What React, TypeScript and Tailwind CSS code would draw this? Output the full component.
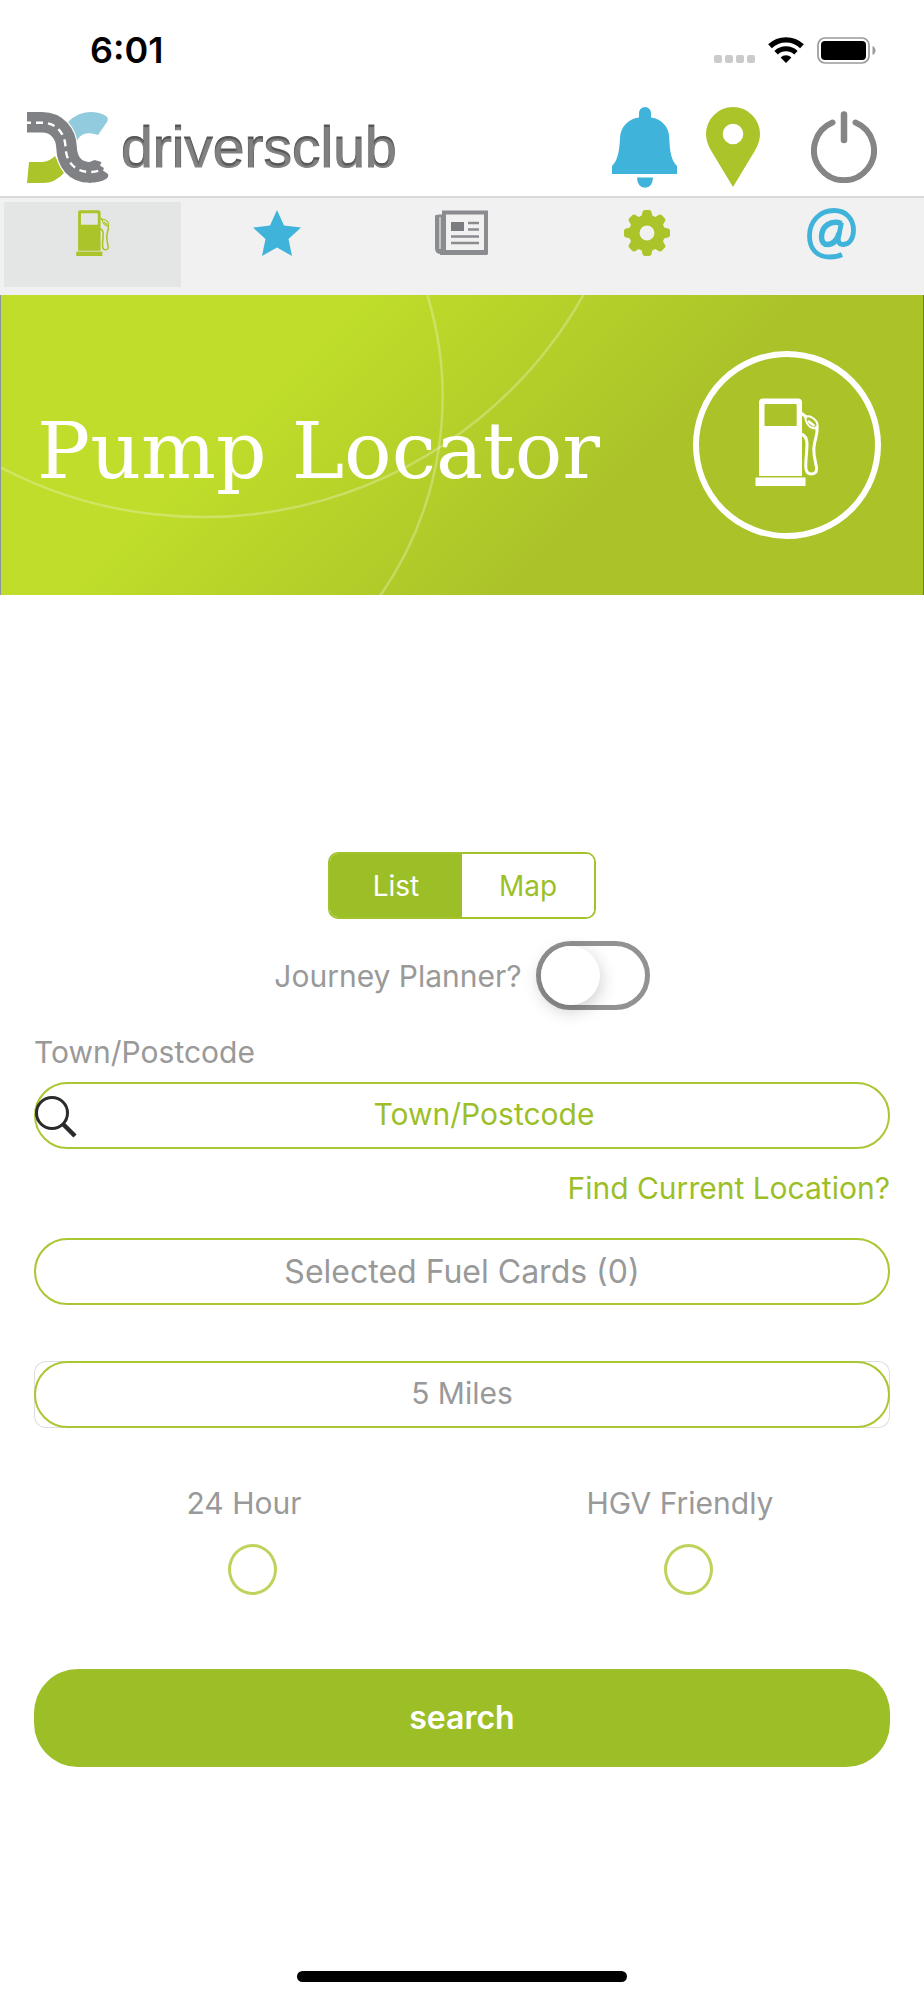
import { useState } from "react";

function WifiIcon() {
  return (
    <svg width="36" height="26" viewBox="0 0 36 26" fill="none" stroke="#000" aria-hidden="true">
      <path d="M2 9.2A23.3 23.3 0 0 1 34 9.2" strokeWidth="5.4" />
      <path d="M8.1 15.7A14.4 14.4 0 0 1 27.9 15.7" strokeWidth="5" />
      <path d="M18 26L12.6 20.4A8 8 0 0 1 23.4 20.4Z" fill="#000" stroke="none" />
    </svg>
  );
}

function BatteryIcon() {
  return (
    <svg width="59" height="27" viewBox="0 0 59 27" fill="none" aria-hidden="true">
      <rect x="1" y="1" width="51" height="25" rx="7" stroke="#9b9b9b" strokeWidth="1.7" />
      <rect x="4" y="4" width="45" height="19" rx="4" fill="#000" />
      <path d="M55.500 9Q58.500 10.500 58.500 13.500T55.500 18Z" fill="#9b9b9b" />
    </svg>
  );
}

function RoadLogo() {
  return (
    <svg width="82" height="71" viewBox="0 0 82 71" fill="none" aria-hidden="true">
      <path d="M41 10Q51 0 63 0Q73 0 79 4Q82 6 80 10L71 23Q63 20 57 22Q52 24 50 29Q47 17 41 10Z" fill="#93cbde" />
      <path d="M2 50H16Q23 49 28 44L37 61Q28 71 16 71H0Z" fill="#abc429" />
      <path d="M0 10.300H15C30 10.300 39 22 39.500 35C40 50 48 60.500 63 60.500H66" stroke="#fff" strokeWidth="23" />
      <path d="M0 10.300H15C30 10.300 39 22 39.500 35C40 50 48 60.500 63 60.500H64" stroke="#808184" strokeWidth="20.600" />
      <path d="M62 50.200L67.500 48L74.500 50L73 53.500L77 56L76 58.500L81 62Q82 65 79 67Q72 71 62 70.800Z" fill="#808184" />
      <path d="M-3 10.800H15C30 10.800 38 22 38.500 35C39 50 48 60 63 60Q70 60 75 57.500" stroke="#fff" strokeWidth="2.400" strokeDasharray="7 5" />
    </svg>
  );
}

function BellIcon() {
  return (
    <svg width="65" height="81" viewBox="0 0 65 81" fill="#3fb3d9" aria-hidden="true">
      <path d="M27 10.500V6A6 6 0 0 1 39 6V10.500C50 12 57 20 57.300 31C57.600 46 60 54 65 59V67H0V59C5 54 7.400 46 8 31C8.500 20 16 12 27 10.500Z" />
      <path d="M25 70.500H41Q40.500 80.700 33 80.700T25 70.500Z" />
    </svg>
  );
}

function PinIcon() {
  return (
    <svg width="54" height="80" viewBox="0 0 54 80" fill="#abc429" aria-hidden="true">
      <path
        fillRule="evenodd"
        d="M27 80L5 43.500Q0 35 0 27A27 27 0 0 1 54 27Q54 35 49 43.500ZM27 16.700A10.300 10.300 0 1 0 27 37.300A10.300 10.300 0 1 0 27 16.700Z"
      />
    </svg>
  );
}

function PowerIcon() {
  return (
    <svg width="66" height="72" viewBox="0 0 66 72" fill="none" stroke="#858585" strokeWidth="6" strokeLinecap="round" aria-hidden="true">
      <path d="M21.500 11.500A30 30 0 1 0 44.500 11.500" />
      <path d="M33 3.500V29" strokeWidth="6.500" />
    </svg>
  );
}

function PumpIcon({ className }: { className?: string }) {
  return (
    <svg viewBox="0 0 64 88" fill="none" className={className} aria-hidden="true">
      <path
        fill="currentColor"
        fillRule="evenodd"
        d="M8 .500H43Q47 .500 47 4.500V78H4V4.500Q4 .500 8 .500ZM10.500 6Q9.500 6 9.500 7V28H41.700V7Q41.700 6 40.700 6Z"
      />
      <path d="M.500 79.500H50.500V88H.500Z" fill="currentColor" />
      <path
        d="M46 15L52 19.500M46 36Q52 38 52 46C52 56 50 64 51 71Q52 76 56 76Q62 76 61.500 70C61 64 58 58 59 49C60 40 63 36 62 28"
        stroke="currentColor"
        strokeWidth="3"
      />
      <path d="M50.500 19Q54 17 58.500 20.500T62.500 28L60 30.500Q55 30 52.500 26T50.500 19Z" stroke="currentColor" strokeWidth="2" />
      <path d="M53 23L59.500 28" stroke="currentColor" strokeWidth="2.500" />
    </svg>
  );
}

function StarIcon() {
  return (
    <svg width="48" height="46" viewBox="0 0 48 46" fill="#3fb3d9" aria-hidden="true">
      <path d="M24 0L31 15.500L48 17.500L35.500 29L39 46L24 37.500L9 46L12.500 29L0 17.500L17 15.500Z" />
    </svg>
  );
}

function NewsIcon() {
  return (
    <svg width="54" height="46" viewBox="0 0 54 46" fill="none" aria-hidden="true">
      <path d="M0 6Q0 4.500 4 4.500H8V44H6Q0 44 0 38Z" fill="#8b8c90" />
      <path d="M5 7V39" stroke="#c4c5c7" strokeWidth="2" />
      <rect x="9" y="2.500" width="42" height="40" fill="#f1f1f1" stroke="#8b8c90" strokeWidth="4" />
      <path d="M5 42.500H52" stroke="#8b8c90" strokeWidth="5" />
      <path d="M16 12H29V21H16Z" fill="#7b7c80" />
      <path d="M33 13H44M33 19.500H44M16 26.500H44M16 33H44" stroke="#8b8c90" strokeWidth="2.600" />
    </svg>
  );
}

function GearIcon() {
  return (
    <svg width="48" height="46" viewBox="-24 -23 48 46" fill="#abc429" aria-hidden="true">
      <circle r="12.700" fill="none" stroke="#abc429" strokeWidth="10.500" />
      {[0, 45, 90, 135, 180, 225, 270, 315].map((angle) => (
        <path key={angle} d="M-6.500 -14L-4.800 -19.500Q-4.500 -23 -2 -23H2Q4.500 -23 4.800 -19.500L6.500 -14Z" transform={`rotate(${angle})`} />
      ))}
    </svg>
  );
}

function AtIcon() {
  return (
    <svg width="49" height="52" viewBox="0 0 49 52" fill="none" stroke="#3fb3d9" className="-mt-0.5" aria-hidden="true">
      <path d="M35 46.500Q30 49 23 49C9 49 2.500 40 2.500 28C2.500 13 13 2.500 27 2.500C39 2.500 46.500 11 46.500 22C46.500 31 42 36.500 36.500 36.500C32 36.500 30.700 33.500 31.500 29L34.500 14.500" strokeWidth="4.800" />
      <path d="M34.500 15.500C24 11.500 14.500 18 14.500 29C14.500 34 17 36.500 20.500 36.500C26.500 36.500 31 31 32 25" strokeWidth="5.500" />
    </svg>
  );
}

function SearchIcon() {
  return (
    <svg width="44" height="44" viewBox="0 0 44 44" fill="none" stroke="#2b2b2b" className="pointer-events-none absolute left-0 top-[13px]" aria-hidden="true">
      <circle cx="18" cy="18" r="15.500" strokeWidth="3" />
      <path d="M29 29L41 41" strokeWidth="4.500" />
    </svg>
  );
}

const tabs = [
  { name: "Pump locator", icon: <PumpIcon className="h-[46px] text-[#abc429]" /> },
  { name: "Favourites", icon: <StarIcon /> },
  { name: "News", icon: <NewsIcon /> },
  { name: "Settings", icon: <GearIcon /> },
  { name: "Contact", icon: <AtIcon /> },
];

export default function App() {
  const [view, setView] = useState("List");
  const [tab, setTab] = useState("Pump locator");

  return (
    <div className="flex min-h-screen flex-col bg-white font-['Inter',sans-serif] text-[30px] leading-10 text-[#999]">
      <div className="flex h-[100px] items-center justify-between pl-[90px] pr-12 text-black">
        <span className="text-[36px] font-semibold">6:01</span>
        <div className="flex items-center gap-[13px]">
          <div className="flex gap-[3px] pt-[18px]">
            <i className="size-2 rounded-xs bg-[#cbcbcb]" />
            <i className="size-2 rounded-xs bg-[#cbcbcb]" />
            <i className="size-2 rounded-xs bg-[#cbcbcb]" />
            <i className="size-2 rounded-xs bg-[#cbcbcb]" />
          </div>
          <WifiIcon />
          <BatteryIcon />
        </div>
      </div>

      <header className="flex h-24 items-center justify-between pb-0.5 pl-[27px] pr-[47px]">
        <a href="#home" className="flex items-center gap-3">
          <RoadLogo />
          <span className="bg-[#555] bg-clip-text font-['Liberation_Sans',Arial,sans-serif] text-[57px] leading-[70px] text-transparent [-webkit-text-stroke:1px_transparent] [text-shadow:0_2px_1px_rgba(255,255,255,0.26)]">
            driversclub
          </span>
        </a>
        <div className="flex items-center">
          <button type="button" aria-label="Notifications" className="mr-[29px]">
            <BellIcon />
          </button>
          <button type="button" aria-label="Location" className="mr-[51px]">
            <PinIcon />
          </button>
          <button type="button" aria-label="Log out">
            <PowerIcon />
          </button>
        </div>
      </header>

      <nav className="grid h-[99px] grid-cols-5 border-t-2 border-[#d9d9d9] bg-[#f1f1f1]">
        {tabs.map((t) => (
          <button
            key={t.name}
            type="button"
            aria-label={t.name}
            onClick={() => setTab(t.name)}
            className={`mx-1 mb-2 mt-1 flex items-start justify-center pt-2 ${tab === t.name ? "bg-[#e4e6e6]" : ""}`}
          >
            {t.icon}
          </button>
        ))}
      </nav>

      <section className="relative flex h-[300px] items-center justify-between border-x border-l-[#8d959c] border-r-[#6d7848] bg-[linear-gradient(135deg,#bfdd2a_30%,#abc329_66%)] pl-9 pr-[42px] text-white">
        <svg viewBox="0 0 924 300" preserveAspectRatio="xMidYMid slice" fill="none" stroke="#fff" strokeOpacity="0.27" strokeWidth="2.500" className="absolute inset-0 size-full" aria-hidden="true">
          <path d="M-2 171A437 437 0 0 0 584 -1" />
          <path d="M427 -1A348 348 0 0 1 380 301" />
        </svg>
        <h1 className="relative pt-3 font-['Roboto_Slab','DejaVu_Serif',serif] text-[79px] font-light leading-[100px]">Pump Locator</h1>
        <div className="relative flex size-[188px] items-center justify-center rounded-full border-6 border-white pb-1.5">
          <PumpIcon className="h-[88px]" />
        </div>
      </section>

      <main className="flex flex-col px-[34px] pt-[257px]">
        <div className="grid h-[67px] w-[268px] grid-cols-2 self-center overflow-hidden rounded-[10px] border-2 border-[#a3c32c] text-[28px]">
          {["List", "Map"].map((v) => (
            <button
              key={v}
              type="button"
              aria-pressed={view === v}
              onClick={() => setView(v)}
              className={view === v ? "bg-[#9cbf28] text-white" : "bg-white text-[#9cbf28]"}
            >
              {v}
            </button>
          ))}
        </div>

        <label className="mt-[22px] flex items-center gap-[14px] self-center">
          Journey Planner?
          <input
            type="checkbox"
            role="switch"
            className="h-[69px] w-[114px] appearance-none rounded-full border-5 border-[#929292] before:block before:size-[59px] before:rounded-full before:bg-white before:shadow-[0_5px_18px_rgba(0,0,0,0.22)] checked:bg-[#9cbf28] checked:before:translate-x-[45px]"
          />
        </label>

        <label htmlFor="town" className="mt-[22px]">
          Town/Postcode
        </label>
        <div className="relative mt-[10px]">
          <input
            id="town"
            type="text"
            placeholder="Town/Postcode"
            className="block h-[67px] w-full rounded-full border-2 border-[#a9c732] pb-1 pl-[100px] pr-14 text-center text-[#9cbf28] outline-none placeholder:text-[#9cbf28]"
          />
          <SearchIcon />
        </div>
        <a href="#location" className="mt-[19px] self-end text-[#9cbf28]">
          Find Current Location?
        </a>

        <button type="button" className="mt-[30px] h-[67px] rounded-full border-2 border-[#a9c732] text-[32px]">
          Selected Fuel Cards (0)
        </button>

        <div className="mt-[56px] rounded-xl shadow-[inset_0_0_0_1px_#dedede]">
          <select
            aria-label="Distance"
            className="block h-[67px] w-full appearance-none rounded-full border-2 border-[#a9c732] pb-1 text-center [text-align-last:center]"
          >
            <option>5 Miles</option>
          </select>
        </div>

        <div className="-mr-4 mt-[55px] grid grid-cols-2">
          {["24 Hour", "HGV Friendly"].map((name) => (
            <label key={name} className="flex flex-col items-center gap-[21px]">
              <span className="pr-4">{name}</span>
              <input
                type="checkbox"
                className="h-[51px] w-[49px] appearance-none rounded-[50%] border-3 border-[#bfd35c] checked:bg-[#9cbf28]"
              />
            </label>
          ))}
        </div>

        <button type="submit" className="mt-[74px] h-[98px] rounded-[44px] bg-[#9cbf28] text-[32px] font-semibold text-white">
          search
        </button>
      </main>

      <div className="mb-[18px] mt-auto h-[11px] w-[330px] self-center rounded-full bg-black" />
    </div>
  );
}
